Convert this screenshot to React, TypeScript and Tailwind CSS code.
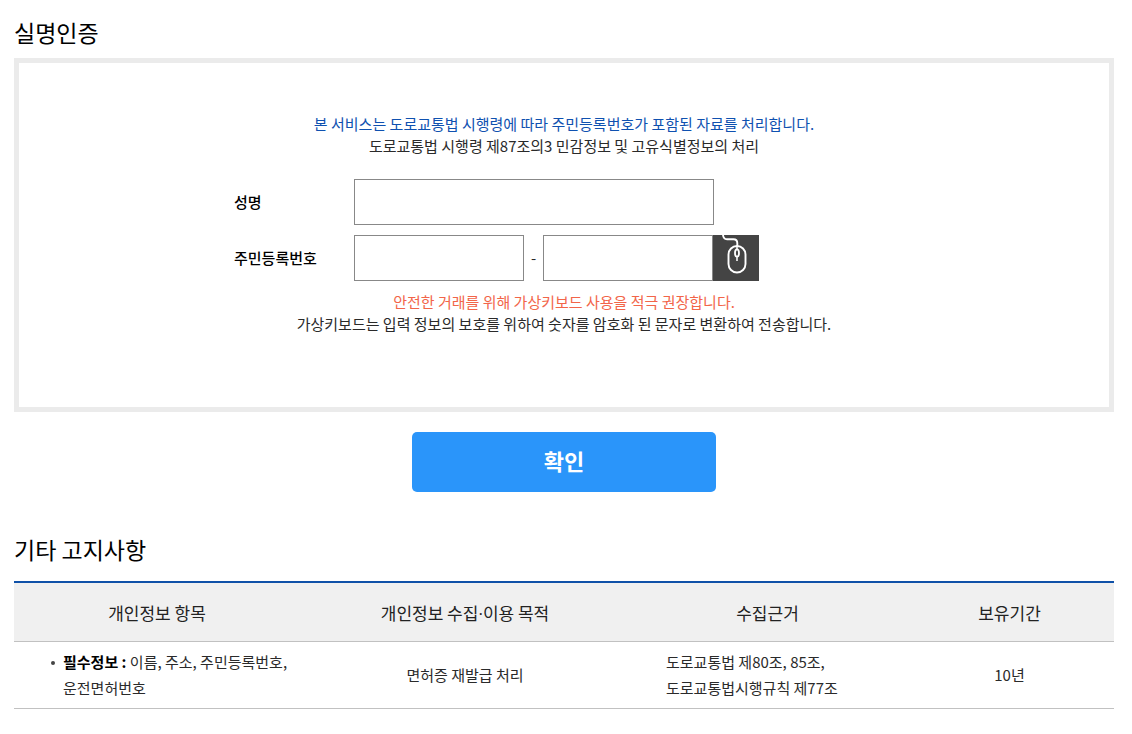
const inputStyle = "h-[46px] border border-[#888] bg-white px-3 text-[15px] outline-none";
const labelStyle = "w-[120px] font-medium text-black";
const headingStyle = "text-[23px] leading-[30px] text-black";
const headCell = "border-b border-[#c1c1c1] bg-[#f0f0f0] pt-[18px] pb-4 font-normal leading-6";
const bodyCell = "border-b border-[#c1c1c1] py-[7px]";

function MouseIcon() {
  return (
    <svg viewBox="0 0 46 46" className="size-full" fill="none" stroke="#fff" strokeWidth="1.9" aria-hidden="true">
      <path d="M10 0c.3 3 1.500 4.300 4 4.300h6.500c2.500 0 3.800 1.500 3.800 4V11" />
      <rect x="15.500" y="11" width="17" height="26.500" rx="8.500" />
      <path d="M24 11v4M24 21v5" strokeWidth="1.500" />
      <ellipse cx="24" cy="18" rx="2" ry="3.700" strokeWidth="1.800" />
    </svg>
  );
}

export default function App() {
  return (
    <main className="pt-[17px] pr-[18px] pb-6 pl-3.5 font-['Noto_Sans_CJK_KR',sans-serif] text-[15px] leading-[22px] text-[#2a2a2a]">
      <h1 className={headingStyle}>실명인증</h1>
      <form className="mt-[11px]" onSubmit={(e) => e.preventDefault()}>
        <div className="border-[5px] border-[#ebebeb] pt-[50px] pb-[72px]">
          <div className="text-center">
            <p className="text-[#0f51b0]">본 서비스는 도로교통법 시행령에 따라 주민등록번호가 포함된 자료를 처리합니다.</p>
            <p>도로교통법 시행령 제87조의3 민감정보 및 고유식별정보의 처리</p>
          </div>
          <div className="mx-auto mt-[22px] max-w-[660px]">
            <div className="flex items-center">
              <label htmlFor="name" className={labelStyle}>성명</label>
              <input id="name" type="text" className={`${inputStyle} w-[360px]`} />
            </div>
            <div className="mt-2.5 flex items-center">
              <label htmlFor="rrn1" className={labelStyle}>주민등록번호</label>
              <input id="rrn1" type="text" className={`${inputStyle} w-[170px]`} />
              <span className="w-[19px] text-center">-</span>
              <input id="rrn2" aria-label="주민등록번호 뒷자리" type="password" className={`${inputStyle} w-[170px]`} />
              <button type="button" aria-label="가상키보드" className="size-[46px] bg-[#444]">
                <MouseIcon />
              </button>
            </div>
          </div>
          <div className="mt-2.5 text-center">
            <p className="text-[#f26549]">안전한 거래를 위해 가상키보드 사용을 적극 권장합니다.</p>
            <p>가상키보드는 입력 정보의 보호를 위하여 숫자를 암호화 된 문자로 변환하여 전송합니다.</p>
          </div>
        </div>
        <button type="submit" className="mx-auto mt-5 block h-[60px] w-[304px] rounded-[5px] bg-[#2a95fa] pb-1 text-[22px] font-bold text-white">확인</button>
      </form>

      <h2 className={`${headingStyle} mt-[42px]`}>기타 고지사항</h2>
      <table className="mt-[17px] w-full table-fixed border-separate border-spacing-0 border-t-2 border-[#0f51a8]">
        <colgroup>
          <col className="w-[26%]" />
          <col className="w-[30%]" />
          <col className="w-[25%]" />
          <col className="w-[19%]" />
        </colgroup>
        <thead className="text-[17px] text-[#222]">
          <tr>
            <th scope="col" className={headCell}>개인정보 항목</th>
            <th scope="col" className={headCell}>
              개인정보 수집<span className="font-['Open_Sans',sans-serif] leading-none">·</span>이용 목적
            </th>
            <th scope="col" className={headCell}>수집근거</th>
            <th scope="col" className={headCell}>보유기간</th>
          </tr>
        </thead>
        <tbody className="leading-[26px]">
          <tr>
            <td className={`${bodyCell} pl-9`}>
              <ul>
                <li className="flex gap-2">
                  <span className="mt-3 ml-px size-1 shrink-0 rounded-full bg-[#444]" />
                  <span>
                    <strong className="font-bold text-black">필수정보 :</strong> 이름, 주소, 주민등록번호,
                    <br />
                    운전면허번호
                  </span>
                </li>
              </ul>
            </td>
            <td className={`${bodyCell} text-center`}>면허증 재발급 처리</td>
            <td className={`${bodyCell} pl-9`}>
              도로교통법 제80조, 85조,
              <br />
              도로교통법시행규칙 제77조
            </td>
            <td className={`${bodyCell} text-center`}>10년</td>
          </tr>
        </tbody>
      </table>
    </main>
  );
}
